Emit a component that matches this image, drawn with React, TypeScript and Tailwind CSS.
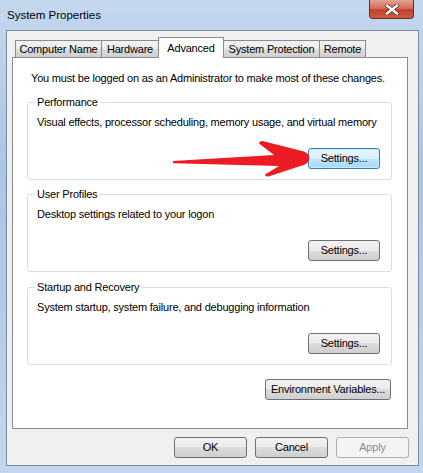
import type { ReactNode } from 'react';

type BtnProps = {
  children: ReactNode;
  focused?: boolean;
  disabled?: boolean;
  className?: string;
};

function WinButton({ children, focused, disabled, className = '' }: BtnProps) {
  let look =
    'border-[#707070] bg-[linear-gradient(#f2f2f2_0%,#ebebeb_50%,#dddddd_50%,#cfcfcf_100%)] text-black';
  if (focused)
    look =
      'border-[#3c7fb1] bg-[linear-gradient(#eaf6fd_0%,#d9f0fc_50%,#bee6fd_50%,#a7d9f5_100%)] text-black shadow-[inset_0_0_0_1px_#c9ecfd]';
  if (disabled) look = 'border-[#adb2b5] bg-[#f4f4f4] text-[#8d8d8d]';
  return (
    <div
      className={`h-[21px] rounded-[3px] border flex items-center justify-center leading-none ${look} ${className}`}
    >
      {children}
    </div>
  );
}

function GroupBox({ title, text, focused }: { title: string; text: string; focused?: boolean }) {
  return (
    <div className="relative h-[78px] rounded-[3px] border border-[#d5dfe5] pt-[11px] pl-[9px] pr-[11px]">
      <span className="absolute left-[7px] top-[-9px] bg-white px-[2px] leading-[16px]">{title}</span>
      <p className="leading-[16px] whitespace-nowrap">{text}</p>
      <div className="flex justify-end mt-[18px]">
        <WinButton focused={focused} className="w-[72px]">Settings...</WinButton>
      </div>
    </div>
  );
}

const tabs = [
  { label: 'Computer Name', w: 'w-[87px]' },
  { label: 'Hardware', w: 'w-[58px] -ml-px' },
  { label: 'Advanced', w: 'w-[66px] -ml-px', active: true },
  { label: 'System Protection', w: 'w-[97px] -ml-px' },
  { label: 'Remote', w: 'w-[47px] -ml-px' },
];

export default function App() {
  return (
    <div className="w-[423px] h-[473px] overflow-hidden bg-[linear-gradient(180deg,#c4d8ee_0%,#aac6e5_35%,#b4cde9_70%,#c3d7ee_100%)] font-['Liberation_Sans',Arial,sans-serif] text-[11px] tracking-[-0.2px] text-black">
      {/* title bar */}
      <div className="h-[30px] flex items-start justify-between">
        <span className="pl-[7px] pt-[7px] leading-[16px] text-[11.5px] tracking-normal">System Properties</span>
        <div className="mr-[9px] w-[45px] h-[19px] rounded-b-[4px] border border-t-0 border-[#6b2a24] bg-[linear-gradient(#e6a290_0%,#d46f5e_45%,#c2412c_55%,#cf5a45_100%)] flex items-center justify-center">
          <svg width="14" height="11" viewBox="0 0 14 11">
            <path d="M2 1.5 L12 9.5 M12 1.5 L2 9.5" stroke="#5a2a24" strokeWidth="4" strokeLinecap="square" />
            <path d="M2 1.5 L12 9.5 M12 1.5 L2 9.5" stroke="#ffffff" strokeWidth="2.4" strokeLinecap="square" />
          </svg>
        </div>
      </div>

      {/* client area */}
      <div className="ml-[6px] w-[413px] h-[436px] border border-[#7b8b9c] bg-[#f0f0f0] pl-[5px] pt-[6px]">
        {/* tabs */}
        <div className="relative z-10 flex items-end h-[21px] pl-[3px] -mb-px">
          {tabs.map((t) =>
            t.active ? (
              <div
                key={t.label}
                className={`relative z-10 h-[21px] ${t.w} border border-b-0 border-[#898c95] bg-white flex items-start justify-center pt-[2px] leading-[16px]`}
              >
                {t.label}
              </div>
            ) : (
              <div
                key={t.label}
                className={`h-[18px] ${t.w} border border-[#898c95] bg-[linear-gradient(#f2f2f2_0%,#ebebeb_50%,#dddddd_51%,#cfcfcf_100%)] flex items-center justify-center leading-[16px]`}
              >
                {t.label}
              </div>
            ),
          )}
        </div>

        {/* tab panel */}
        <div className="relative w-[396px] h-[372px] border border-[#898c95] bg-white pl-[14px] pr-[15px]">
          <p className="mt-[12px] ml-[4px] leading-[16px] whitespace-nowrap">
            You must be logged on as an Administrator to make most of these changes.
          </p>
          <div className="mt-[16px]">
            <GroupBox focused title="Performance" text="Visual effects, processor scheduling, memory usage, and virtual memory" />
          </div>
          <div className="mt-[14px]">
            <GroupBox title="User Profiles" text="Desktop settings related to your logon" />
          </div>
          <div className="mt-[15px]">
            <GroupBox title="Startup and Recovery" text="System startup, system failure, and debugging information" />
          </div>
          <div className="mt-[14px] flex justify-end pr-[1px]">
            <WinButton className="w-[126px]">Environment Variables...</WinButton>
          </div>

          {/* red arrow drawn over the panel */}
          <svg
            className="absolute left-[157px] top-[80px]"
            width="145"
            height="42"
            viewBox="170 138 145 42"
          >
            <path
              d="M173 161 L274 155 L259 143.5 Q259 141 262.5 141 L304 151.5 Q309 153.5 309.5 158 Q309 162.5 305 164.5 L268.5 176.5 Q265 177 265 174.5 L279 166 L173 163.2 Z"
              fill="#ec1c24"
            />
          </svg>
        </div>

        {/* dialog buttons */}
        <div className="flex justify-end gap-[8px] mt-[8px] pr-[9px]">
          <WinButton className="w-[73px]">OK</WinButton>
          <WinButton className="w-[73px]">Cancel</WinButton>
          <WinButton disabled className="w-[73px]">Apply</WinButton>
        </div>
      </div>
    </div>
  );
}
